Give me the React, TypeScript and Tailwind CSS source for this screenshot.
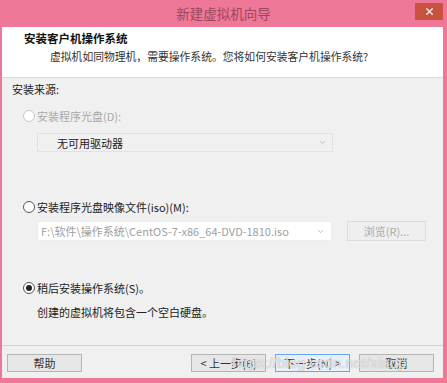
import React from "react";
import { ChevronDown, X } from "lucide-react";

const font = { fontFamily: '"Noto Sans CJK SC", "Noto Sans", sans-serif' };

const Radio = ({ checked, disabled }: { checked?: boolean; disabled?: boolean }) => (
  <span
    className={`w-[12px] h-[12px] rounded-full border flex items-center justify-center bg-white ${
      disabled ? "border-[#c8c8c8] bg-[#f4f4f4]" : "border-[#555]"
    }`}
  >
    {checked && <span className="w-[6px] h-[6px] rounded-full bg-[#222]" />}
  </span>
);

const Button = ({ label, primary }: { label: string; primary?: boolean }) => (
  <button
    className={`w-[75px] h-[18px] text-[11px] leading-none text-[#333] border ${
      primary ? "border-[#6aa6e8] bg-[#e8f1fb]" : "border-[#b4b4b4] bg-[#e6e6e6]"
    }`}
  >
    {label}
  </button>
);

export default function App() {
  return (
    <div className="w-[447px] h-[383px] bg-[#ef7797] flex flex-col relative" style={font}>
      <div className="h-[27px] relative flex items-center justify-center">
        <span className="text-[13.5px] text-[#9c4762]">新建虚拟机向导</span>
        <div className="absolute right-[4px] top-[3px] w-[28px] h-[17px] bg-[#c9513f] flex items-center justify-center">
          <X size={11} strokeWidth={3} className="text-[#f6e6e2]" />
        </div>
      </div>
      <div className="flex-1 ml-[2px] mr-[4px] mb-[5px] bg-[#f0f0f0] flex flex-col">
        <div className="h-[51px] bg-white border-b border-[#d9d9d9] pl-[22px] pt-[3px]">
          <div className="text-[11.5px] leading-[16px] font-bold text-[#111]">安装客户机操作系统</div>
          <div className="mt-[2px] pl-[26px] text-[10.8px] leading-[16px] text-[#333]">
            虚拟机如同物理机，需要操作系统。您将如何安装客户机操作系统?
          </div>
        </div>
        <div className="flex-1 pl-[10px] text-[11px] leading-[16px] text-[#222]">
          <div className="mt-[3px]">安装来源:</div>
          <div className="mt-[11px] ml-[11px] flex items-center gap-[2px] text-[#a8a8a8]">
            <Radio disabled />
            <span>安装程序光盘(D):</span>
          </div>
          <div className="mt-[9px] ml-[25px] w-[296px] h-[19px] border border-[#e2e2e2] bg-[#f0f0f0] flex items-center justify-between pl-[19px] pr-[5px]">
            <span className="text-[#222]">无可用驱动器</span>
            <ChevronDown size={9} className="text-[#aaa]" />
          </div>
          <div className="mt-[47px] ml-[11px] flex items-center gap-[2px]">
            <Radio />
            <span>安装程序光盘映像文件(iso)(M):</span>
          </div>
          <div className="mt-[6px] ml-[25px] flex items-center">
            <div className="w-[295px] h-[20px] bg-white border border-[#ededed] flex items-center justify-between pl-[3px] pr-[6px]">
              <span className="text-[#a0a0a0]">F:\软件\操作系统\CentOS-7-x86_64-DVD-1810.iso</span>
              <ChevronDown size={9} className="text-[#aaa]" />
            </div>
            <div className="ml-[15px] w-[79px] h-[20px] border border-[#dcdcdc] bg-[#efefef] flex items-center justify-center text-[#aaa]">
              浏览(R)...
            </div>
          </div>
          <div className="mt-[39px] ml-[11px] flex items-center gap-[2px]">
            <Radio checked />
            <span>稍后安装操作系统(S)。</span>
          </div>
          <div className="mt-[8px] ml-[25px]">创建的虚拟机将包含一个空白硬盘。</div>
        </div>
        <div className="h-[33px] border-t border-[#d2d2d2] flex items-start pt-[8px] pl-[5px] pr-[9px]">
          <Button label="帮助" />
          <div className="flex-1" />
          <div className="flex gap-[9px]">
            <Button label="< 上一步(B)" />
            <Button label="下一步(N) >" primary />
            <Button label="取消" />
          </div>
        </div>
      </div>
      <div
        className="absolute left-[232px] top-[352px] text-[15px] text-white/70 pointer-events-none"
        style={{ fontFamily: '"Liberation Sans", sans-serif', textShadow: "0 0 1px #999" }}
      >
        https://blog.csdn.net/xiaop
      </div>
    </div>
  );
}
